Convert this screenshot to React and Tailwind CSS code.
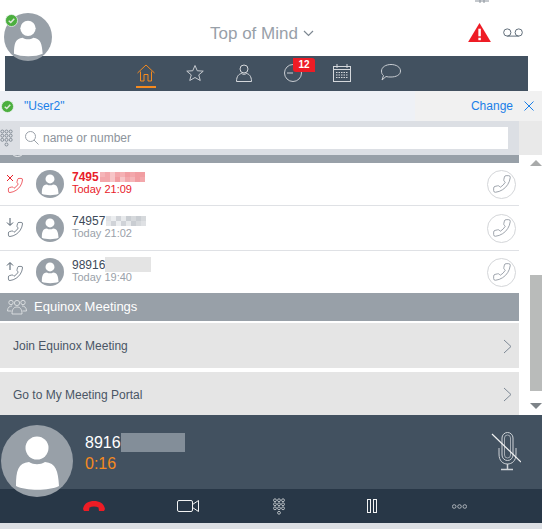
import React from "react";

const Avatar = ({ size, className = "" }) => (
  <svg width={size} height={size} viewBox="0 0 72 72" className={className}>
    <circle cx="36" cy="36" r="36" fill="#98a0a8" />
    <circle cx="36" cy="23" r="11.5" fill="#fff" />
    <path d="M15 61 C15 46 17 38 28 37 C33 40 39 40 44 37 C55 38 57 46 58 61 C48 66 25 66 15 61Z" fill="#fff" />
  </svg>
);

const Check = ({ size, className = "" }) => (
  <svg width={size} height={size} viewBox="0 0 14 14" className={className}>
    <circle cx="7" cy="7" r="6.5" fill="#4caf3f" stroke="#eef1f6" strokeWidth="0.8" />
    <path d="M4 7.2 L6.2 9.2 L10 5" fill="none" stroke="#dfe8dc" strokeWidth="1.6" />
  </svg>
);

const Handset = ({ size, color, width = 1, className = "" }) => (
  <svg width={size} height={size} viewBox="0 0 24 24" fill="none" stroke={color} strokeWidth={width} className={className}>
    <path transform="translate(24 0) scale(-1 1)" d="M22 16.9v3a2 2 0 0 1-2.2 2 19.8 19.8 0 0 1-8.6-3.1 19.5 19.5 0 0 1-6-6A19.8 19.8 0 0 1 2.1 4.2 2 2 0 0 1 4.1 2h3a2 2 0 0 1 2 1.7c.1 1 .4 1.9.7 2.8a2 2 0 0 1-.5 2.1L8.1 9.9a16 16 0 0 0 6 6l1.3-1.3a2 2 0 0 1 2.1-.4c.9.3 1.800.6 2.800.7A2 2 0 0 1 22 16.9z" />
  </svg>
);

const Keypad = ({ color, w, h, className = "" }) => {
  const dots = [];
  for (let r = 0; r < 3; r++) for (let c = 0; c < 3; c++) dots.push([2.5 + c * 4.5, 2.5 + r * 4.5]);
  dots.push([7, 16.5]);
  return (
    <svg width={w} height={h} viewBox="0 0 14 19" fill="none" stroke={color} strokeWidth="0.8" className={className}>
      {dots.map(([x, y], i) => <circle key={i} cx={x} cy={y} r="1.6" />)}
    </svg>
  );
};

const Pixels = ({ colors, className }) => (
  <span className={`inline-flex flex-wrap h-[10px] overflow-hidden ${className}`}>
    {colors.map((c, i) => (
      <span key={i} className="w-[5px] h-[5px]" style={{ backgroundColor: c }} />
    ))}
  </span>
);

const redPix = ["#f5b5b8","#f3a7ab","#f7c5c7","#f3a7ab","#f5b0b3","#f19da1","#f3a7ab","#f19da1","#f19da1","#f3a7ab","#f3a7ab","#f7c5c7","#f19da1","#f7c5c7","#f3a7ab","#f5b5b8","#f19da1","#f3a7ab"];
const grayPix = ["#dfe1e4","#eceef0","#d0d3d8","#e8eaec","#c9cdd2","#d6d9dc","#c9cdd2","#d6d9dc","#e6e8ea","#d0d3d8","#eceef0","#d0d3d8","#e6e8ea","#c9cdd2","#d6d9dc","#dfe1e4"];

const DirIcon = ({ kind }) => {
  const color = kind === "missed" ? "#e8202a" : "#4a5866";
  return (
    <div className="w-[17px] h-[17px] relative ml-[6px] shrink-0">
      <Handset size={17} color={color} className="absolute left-[1px] top-[1px]" />
      <svg width="9" height="9" viewBox="0 0 9 9" fill="none" stroke={color} strokeWidth="1" className="absolute left-0 top-[-2px]">
        {kind === "missed" && <path d="M1 1 L7 7 M7 1 L1 7" />}
        {kind === "in" && <path d="M4 0 V7 M1 4.500 L4 7.500 L7 4.500" />}
        {kind === "out" && <path d="M4 8 V1 M1 3.500 L4 .5 L7 3.500" />}
      </svg>
    </div>
  );
};

const CallBtn = () => (
  <div className="w-[29px] h-[29px] rounded-full border border-[#d4d6d9] flex items-center justify-center mr-[3px] shrink-0">
    <Handset size={20} color="#8b939c" />
  </div>
);

const Row = ({ kind, children, time, red, className }) => (
  <div className={`flex items-center ${className}`}>
    <DirIcon kind={kind} />
    <Avatar size={28} className="ml-[13px] shrink-0" />
    <div className="ml-[8px] flex-1 leading-none pb-[4px]">
      <div className={`flex items-center text-[12px] h-[14px] ${red ? "text-[#e8202a] font-bold" : "text-[#3d4a59]"}`}>
        {children}
      </div>
      <div className={`text-[11px] ${red ? "text-[#e8202a]" : "text-[#9aa1a9]"}`}>{time}</div>
    </div>
    <CallBtn />
  </div>
);

const Chevron = () => (
  <svg width="9" height="15" viewBox="0 0 9 15" fill="none" stroke="#7d8895" strokeWidth="1">
    <path d="M1 1 L8 7.500 L1 14" />
  </svg>
);

const MeetingItem = ({ label, h }) => (
  <div className={`flex items-center justify-between bg-[#e5e5e5] pl-[13px] pr-[7px] ${h}`}>
    <span className="text-[12px] text-[#4a5665]">{label}</span>
    <Chevron />
  </div>
);

export default function App() {
  return (
    <div className="relative w-[542px] h-[529px] overflow-hidden bg-white flex flex-col" style={{ fontFamily: '"Liberation Sans", Arial, sans-serif' }}>
      {/* header */}
      <div className="h-[56px] shrink-0 relative flex items-center pt-[10px] pl-[210px]">
        <span className="text-[17px] text-[#98a0a8] mt-[2px]">Top of Mind</span>
        <svg width="11" height="7" viewBox="0 0 11 7" fill="none" stroke="#7d8791" strokeWidth="1.200" className="ml-[5px] mt-[1px]">
          <path d="M1 1 L5.500 5.500 L10 1" />
        </svg>
        <svg width="23" height="19" viewBox="0 0 24 20" className="ml-[154px] mb-[1px]">
          <path d="M12 0 L24 20 H0Z" fill="#ee1c25" />
          <rect x="10.800" y="6" width="2.600" height="8" fill="#fff" />
          <rect x="10.800" y="15.500" width="2.600" height="2.600" fill="#fff" />
        </svg>
        <svg width="20" height="9" viewBox="0 0 21 9" fill="none" stroke="#5b6875" strokeWidth="1" className="ml-[12px] mb-[2px]">
          <circle cx="4.500" cy="4.500" r="3.800" />
          <circle cx="16.500" cy="4.500" r="3.800" />
          <path d="M4.500 8.300 H16.500" />
        </svg>
        <svg width="14" height="3" viewBox="0 0 14 3" fill="none" stroke="#8b939c" className="absolute left-[475px] top-0">
          <path d="M0 1 H14 M5 0 V3 M9 0 V3" />
        </svg>
      </div>

      {/* nav */}
      <div className="h-[35px] ml-[5px] mr-[14px] bg-[#425160] shrink-0 relative flex items-center pl-[131px] pb-[2px]">
        <div className="w-[20px] flex flex-col items-center relative">
          <svg width="18" height="18" viewBox="0 0 18 18" fill="none" stroke="#f58a1f" strokeWidth="1">
            <path d="M.5 9 L9 1 L17.500 9 M3.500 7.500 V17 H7 V10.500 H11 V17 H14.500 V7.500" />
          </svg>
          <span className="absolute top-[22px] w-[20px] h-[2px] bg-[#f58a1f]" />
        </div>
        <svg width="18" height="18" viewBox="0 0 24 24" fill="none" stroke="#c9cdd2" strokeWidth="1.300" className="ml-[30px]">
          <path d="M12 2 L15 9 L23 9.500 L17 14.500 L19 22 L12 18 L5 22 L7 14.500 L1 9.500 L9 9Z" />
        </svg>
        <svg width="16" height="18" viewBox="0 0 16 18" fill="none" stroke="#d5d8dc" strokeWidth="1" className="ml-[32px]">
          <circle cx="8" cy="5" r="4" />
          <path d="M.5 17.500 C.5 12 3 10 5.500 9.500 C7 10.500 9 10.500 10.500 9.500 C13 10 15.500 12 15.500 17.500Z" />
        </svg>
        <div className="relative ml-[32px] w-[18px] h-[18px]">
          <svg width="18" height="18" viewBox="0 0 18 18" fill="none" stroke="#c9cdd2" strokeWidth="1">
            <circle cx="9" cy="9" r="8.500" />
            <path d="M9 9 H3" />
          </svg>
          <span className="absolute left-[9px] top-[-6px] w-[22px] h-[14px] bg-[#ee1c25] rounded-tr-[3px] rounded-bl-[3px] text-white text-[10px] font-bold flex items-center justify-center leading-none">12</span>
        </div>
        <svg width="18" height="18" viewBox="0 0 18 18" fill="none" stroke="#d5d8dc" strokeWidth="1" className="ml-[31px]">
          <rect x=".5" y="2.500" width="17" height="15" />
          <path d="M4 0 V4 M14 0 V4 M.5 5.500 H17.500" />
          <path d="M3 8.500 H15 M3 11 H15 M3 13.500 H15" strokeDasharray="1.500 1" />
        </svg>
        <svg width="20" height="17" viewBox="0 0 20 17" fill="none" stroke="#c9cdd2" strokeWidth="1" className="ml-[30px]">
          <path d="M10 .5 C15 .5 19.500 3 19.500 7 C19.500 11 15 13 10 13 C8 13 6.500 13 5 12.500 L1 16 L2.500 11.500 C1 10.500 .5 9 .5 7 C.5 3 5 .5 10 .5Z" />
        </svg>
      </div>

      {/* banner */}
      <div className="h-[30px] shrink-0 flex bg-[#f1f1f1]">
        <div className="w-[415px] bg-[#eef1f6] flex items-center pl-[1px]">
          <Check size={13} />
          <span className="ml-[10px] text-[12px] text-[#1a7fe8]">"User2"</span>
        </div>
        <div className="flex-1 flex items-center justify-end pr-[8px]">
          <span className="text-[12px] text-[#1a7fe8]">Change</span>
          <svg width="10" height="10" viewBox="0 0 10 10" fill="none" stroke="#1a7fe8" strokeWidth="1" className="ml-[11px]">
            <path d="M.5 .5 L9.500 9.500 M9.500 .5 L.5 9.500" />
          </svg>
        </div>
      </div>

      {/* search */}
      <div className="h-[34px] shrink-0 flex bg-[#e9e9e9]">
        <div className="w-[519px] bg-[#dcdfe4] flex items-center">
          <Keypad color="#6c7782" w={13} h={20} />
          <div className="ml-[7px] w-[488px] h-[22px] bg-white flex items-center pl-[5px]">
            <svg width="14" height="14" viewBox="0 0 14 14" fill="none" stroke="#9aa1a9" strokeWidth="1">
              <circle cx="5.500" cy="5.500" r="5" />
              <path d="M9 9 L13.500 13.500" />
            </svg>
            <span className="ml-[4px] text-[12px] text-[#8d949c]">name or number</span>
          </div>
        </div>
      </div>

      {/* list + scrollbar */}
      <div className="h-[260px] shrink-0 flex">
        <div className="w-[519px] flex flex-col">
          <div className="h-[8px] bg-[#98a0a8] relative overflow-hidden">
            <svg width="15" height="15" viewBox="0 0 15 15" fill="none" stroke="#eef0f2" className="absolute left-[10px] top-[-13px]">
              <circle cx="7.500" cy="7.500" r="7" />
            </svg>
          </div>
          <Row kind="missed" time="Today 21:09" red className="h-[43px] border-b border-[#dfe1e5]">
            <span>7495</span>
            <Pixels colors={redPix} className="w-[45px] ml-[1px]" />
          </Row>
          <Row kind="in" time="Today 21:02" className="h-[45px] border-b border-[#dfe1e5]">
            <span>74957</span>
            <Pixels colors={grayPix} className="w-[40px] ml-[1px]" />
          </Row>
          <Row kind="out" time="Today 19:40" className="h-[42px]">
            <span>98916</span>
            <span className="w-[46px] h-[15px] bg-[#e4e4e4]" />
          </Row>
          <div className="h-[28px] bg-[#98a0a8] flex items-center pl-[7px]">
            <svg width="20" height="16" viewBox="0 0 20 16" fill="none" stroke="#e6e8ea" strokeWidth="0.800">
              <circle cx="10" cy="4" r="2.600" />
              <circle cx="4" cy="3.500" r="2.200" />
              <circle cx="16" cy="3.500" r="2.200" />
              <path d="M5 15 C5 10 7 8 10 8 C13 8 15 10 15 15Z" />
              <path d="M5 7 C2.500 7 .5 8.500 .5 12 H4.500 M15 7 C17.500 7 19.500 8.500 19.500 12 H15.500" />
            </svg>
            <span className="ml-[7px] text-[13px] text-white">Equinox Meetings</span>
          </div>
          <div className="h-[2px]" />
          <MeetingItem label="Join Equinox Meeting" h="h-[45px] pt-[1px]" />
          <div className="h-[4px]" />
          <MeetingItem label="Go to My Meeting Portal" h="h-[43px] pt-[2px]" />
        </div>
        <div className="w-[11px]" />
        <div className="w-[12px] flex flex-col items-center">
          <svg width="12" height="6" viewBox="0 0 12 6" className="mt-[5px]"><path d="M6 0 L12 6 H0Z" fill="#a8aaaa" /></svg>
          <div className="mt-[109px] w-[12px] h-[116px] bg-[#b9bbba]" />
          <svg width="12" height="6" viewBox="0 0 12 6" className="mt-[12px]"><path d="M0 0 H12 L6 6Z" fill="#7d8388" /></svg>
        </div>
      </div>

      {/* call panel */}
      <div className="h-[74px] shrink-0 bg-[#425160] flex justify-between pl-[85px] pr-[21px]">
        <div className="pt-[18px] leading-none">
          <div className="flex items-start text-[16px] text-white h-[19px]">
            <span className="mt-[2px]">8916</span>
            <span className="w-[64px] h-[19px] bg-[#838e99]" />
          </div>
          <div className="text-[16px] text-[#f58a1f] mt-[4px]">0:16</div>
        </div>
        <svg width="30" height="39" viewBox="0 0 30 39" fill="none" stroke="#cfd3d7" strokeWidth="1" className="mt-[17px]">
          <rect x="11" y=".5" width="11" height="28" rx="5.500" />
          <rect x="13.500" y="3" width="6" height="23" rx="3" strokeWidth="0.700" />
          <path d="M8 16 V22 C8 29 12 32 16.500 32 C21 32 25 29 25 22 V16" />
          <path d="M16.500 32 V37 M10 37.500 H22" strokeWidth="1.500" />
          <path d="M1 2 L30 30" stroke="#f0f1f2" strokeWidth="1.200" />
        </svg>
      </div>

      {/* call actions */}
      <div className="h-[34px] shrink-0 bg-[#283747] flex items-center pl-[83px]">
        <svg width="22" height="10" viewBox="0 0 22 10" className="shrink-0">
          <path d="M0 8 C1 2 6 0 11 0 C16 0 21 2 22 8 L21 10 H16 L15.500 6.500 C13 5 9 5 6.500 6.500 L6 10 H1Z" fill="#ee1c25" />
        </svg>
        <svg width="22" height="12" viewBox="0 0 22 12" fill="none" stroke="#f2f3f4" strokeWidth="1" className="ml-[72px] shrink-0">
          <rect x=".5" y=".5" width="15" height="11" rx="1.500" />
          <path d="M15.500 4.500 L21.500 .5 V11.500 L15.500 7.500" />
        </svg>
        <Keypad color="#e6e8ea" w={14} h={17} className="ml-[73px] shrink-0" />
        <svg width="10" height="14" viewBox="0 0 10 14" fill="none" stroke="#f2f3f4" strokeWidth="1" className="ml-[81px] shrink-0">
          <rect x=".5" y=".5" width="3" height="13" />
          <rect x="6.500" y=".5" width="3" height="13" />
        </svg>
        <svg width="15" height="5" viewBox="0 0 15 5" fill="none" stroke="#c9cdd2" strokeWidth="0.800" className="ml-[75px] shrink-0">
          <circle cx="2.200" cy="2.500" r="1.800" />
          <circle cx="7.500" cy="2.500" r="1.800" />
          <circle cx="12.800" cy="2.500" r="1.800" />
        </svg>
      </div>
      <div className="flex-1 bg-[#dcdfe4]" />

      {/* overlays */}
      <div className="absolute left-[4px] top-[13px]">
        <Avatar size={48} />
        <Check size={13} className="absolute left-[1px] top-[1px]" />
      </div>
      <Avatar size={72} className="absolute left-[1px] top-[425px]" />
    </div>
  );
}
